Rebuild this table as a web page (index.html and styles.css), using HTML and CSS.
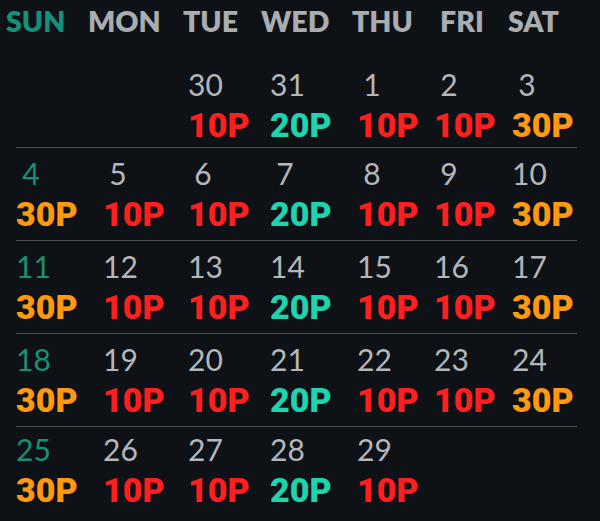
FILE: index.html
```html
<!DOCTYPE html>
<html lang="en">
<head>
  <meta charset="UTF-8" />
  <meta name="viewport" content="width=device-width, initial-scale=1.0"/>
  <title>Calendar</title>
  <link rel="stylesheet" href="styles.css">
</head>
<body>
  <div class="weekdays">
    <span class="sun">SUN</span>
    <span>MON</span>
    <span>TUE</span>
    <span>WED</span>
    <span>THU</span>
    <span>FRI</span>
    <span>SAT</span>
  </div>

  <div class="weeks">
    <div class="week">
      <div class="day"></div>
      <div class="day"></div>
      <div class="day"><div class="num">30</div><div class="price red">10P</div></div>
      <div class="day"><div class="num">31</div><div class="price teal">20P</div></div>
      <div class="day"><div class="num">1</div><div class="price red">10P</div></div>
      <div class="day"><div class="num">2</div><div class="price red">10P</div></div>
      <div class="day"><div class="num">3</div><div class="price orange">30P</div></div>
    </div>
    <div class="week">
      <div class="day"><div class="num sun">4</div><div class="price orange">30P</div></div>
      <div class="day"><div class="num">5</div><div class="price red">10P</div></div>
      <div class="day"><div class="num">6</div><div class="price red">10P</div></div>
      <div class="day"><div class="num">7</div><div class="price teal">20P</div></div>
      <div class="day"><div class="num">8</div><div class="price red">10P</div></div>
      <div class="day"><div class="num">9</div><div class="price red">10P</div></div>
      <div class="day"><div class="num">10</div><div class="price orange">30P</div></div>
    </div>
    <div class="week">
      <div class="day"><div class="num sun">11</div><div class="price orange">30P</div></div>
      <div class="day"><div class="num">12</div><div class="price red">10P</div></div>
      <div class="day"><div class="num">13</div><div class="price red">10P</div></div>
      <div class="day"><div class="num">14</div><div class="price teal">20P</div></div>
      <div class="day"><div class="num">15</div><div class="price red">10P</div></div>
      <div class="day"><div class="num">16</div><div class="price red">10P</div></div>
      <div class="day"><div class="num">17</div><div class="price orange">30P</div></div>
    </div>
    <div class="week">
      <div class="day"><div class="num sun">18</div><div class="price orange">30P</div></div>
      <div class="day"><div class="num">19</div><div class="price red">10P</div></div>
      <div class="day"><div class="num">20</div><div class="price red">10P</div></div>
      <div class="day"><div class="num">21</div><div class="price teal">20P</div></div>
      <div class="day"><div class="num">22</div><div class="price red">10P</div></div>
      <div class="day"><div class="num">23</div><div class="price red">10P</div></div>
      <div class="day"><div class="num">24</div><div class="price orange">30P</div></div>
    </div>
    <div class="week">
      <div class="day"><div class="num sun">25</div><div class="price orange">30P</div></div>
      <div class="day"><div class="num">26</div><div class="price red">10P</div></div>
      <div class="day"><div class="num">27</div><div class="price red">10P</div></div>
      <div class="day"><div class="num">28</div><div class="price teal">20P</div></div>
      <div class="day"><div class="num">29</div><div class="price red">10P</div></div>
      <div class="day"></div>
      <div class="day"></div>
    </div>
  </div>
</body>
</html>
```

FILE: styles.css
```css
body {
  margin: 0;
  background-color: #0e1217;
  font-family: 'Lato', sans-serif;
  color: #b4b6b9;
  width: 600px;
  height: 521px;
  overflow: hidden;
}
.weekdays {
  display: grid;
  grid-template-columns: 82px 95px 78px 91px 88px 68px 1fr;
  margin-top: 3px;
  padding-left: 6px;
  font-size: 28.5px;
  font-weight: 800;
  line-height: 36px;
  color: #a9acb0;
}
.sun {
  color: #14917a;
}
.weeks {
  margin-top: 16px;
  margin-left: 16px;
  width: 561px;
}
.week {
  display: grid;
  grid-template-columns: 87px 85px 82px 87px 77px 78px 1fr;
  padding: 7px 0 8px;
  border-bottom: 1px solid #4a4d52;
}
.week:first-child {
  padding-top: 11px;
  padding-bottom: 4px;
}
.week:last-child {
  border-bottom: none;
  padding-top: 4px;
}
.num {
  width: 30px;
  text-align: center;
  font-size: 30px;
  line-height: 36px;
}
.num.sun {
  color: #1b8f74;
}
.price {
  margin-top: 5px;
  font-family: 'Roboto', sans-serif;
  font-weight: 900;
  font-size: 34px;
  line-height: 36px;
}
.red {
  color: #ff1f1f;
}
.teal {
  color: #1fd3ae;
}
.orange {
  color: #ff9812;
}
```
